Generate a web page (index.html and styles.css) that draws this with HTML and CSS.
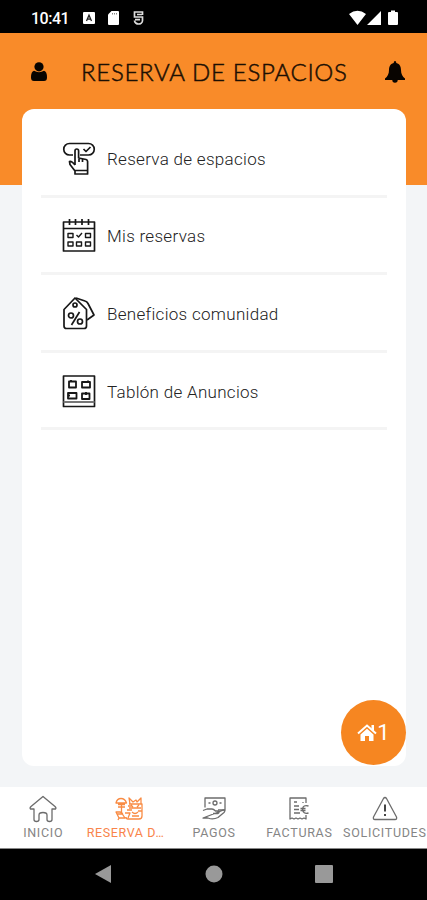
FILE: index.html
```
<!DOCTYPE html>
<html lang="es">
<head>
<meta charset="utf-8">
<meta name="viewport" content="width=device-width, initial-scale=1">
<title>Reserva de espacios</title>
<link rel="stylesheet" href="styles.css">
</head>
<body>
<div class="status">
  <span class="time">10:41</span>
  <svg class="ic-a" width="12" height="12" viewBox="0 0 12 12"><rect width="12" height="12" rx="1" fill="#fff"/><path d="M3.500 9 6 3.200 8.500 9M4.500 7.200h3" fill="none" stroke="#222" stroke-width="1.300"/></svg>
  <svg class="ic-sd" width="11" height="14" viewBox="0 0 11 14"><path d="M3.500 0H10a1 1 0 0 1 1 1v12a1 1 0 0 1-1 1H1a1 1 0 0 1-1-1V3.500z" fill="#fff"/><path d="M4.500 2v1.500M6.500 2v1.500M8.500 2v1.500" stroke="#777" stroke-width=".9"/></svg>
  <svg class="ic-s" width="11" height="14" viewBox="0 0 11 14"><path d="M9.500 4V1H1.500v5h8v3.500C9.500 11.500 7.500 13 5.500 13S1.500 11.500 1.500 9.500M4 3.500h5M2 8.700h5" fill="none" stroke="#ddd" stroke-width="1.700"/></svg>
  <svg class="ic-net" width="49" height="16" viewBox="0 0 49 16"><path d="M0 4Q8.500-2.500 17 4L8.500 15zM32 1v14H18zM40 2h2V.5h4V2h2q1 0 1 1v11q0 1-1 1h-8q-1 0-1-1V3q0-1 1-1z" fill="#fff"/></svg>
</div>
<header class="header">
  <svg class="user" width="16" height="19" viewBox="0 0 16 19"><circle cx="8" cy="4.800" r="4.600" fill="#080400"/><path d="M3 8.800Q8 11.500 13 8.800 16 9.500 16 15.500 16 19 13 19H3Q0 19 0 15.500 0 9.500 3 8.800z" fill="#080400"/></svg>
  <h1 class="title">RESERVA DE ESPACIOS</h1>
  <svg class="bell" width="20" height="22" viewBox="0 0 20 22"><path d="M10 0q1.300 0 1.300 2C15 3 16 6 16 9c0 4 1.500 6.500 4 8.500V19h-7.300a2.700 2.700 0 0 1-5.400 0H0v-1.500C2.500 15.500 4 13 4 9c0-3 1-6 4.700-7Q8.700 0 10 0z" fill="#080400"/></svg>
</header>
<main class="card">
  <div class="row">
    <svg class="icon" width="34" height="34" viewBox="0 0 34 34"><path d="M11 14H7.500a5.700 5.700 0 0 1 0-11.500h19a5.700 5.700 0 0 1 0 11.500H18"/><path d="m21.500 8 2.500 2.500L28.500 6"/><path d="M13 24V10q0-2 1.800-2t1.800 2v7l7.500 1.500q1.500.5 1.500 2V33H13v-3l-5-6.500-.5-3q2-.8 5.500 3.500M13 29.500h12.500M17 18v3M20.500 18.500V21"/></svg>
    <span>Reserva de espacios</span>
  </div>
  <div class="row">
    <svg class="icon" width="34" height="34" viewBox="0 0 34 34"><path d="M1.500 4h31v29h-31zM1.500 10.500h31M7.500 1v6M13.500 1v6M20 1v6M26.500 1v6"/><path class="fine" d="M6 15.500h5v4H6zM23.500 15.500h5v4h-5zM6 24h5v4H6zM14.500 24h5v4h-5zM23.500 24h5v4h-5zM14.500 17l2 2 3.500-4"/></svg>
    <span>Mis reservas</span>
  </div>
  <div class="row">
    <svg class="icon" width="34" height="34" viewBox="0 0 34 34"><path d="M2 13.500 13 2l11.500 11.500V30q0 2.500-2.500 2.500H4.500Q2 32.500 2 30z"/><path d="m14 2 9 3q2 .6 3 2.500l6 11.500-7 5"/><circle cx="13" cy="9" r="2"/><path d="m17.500 16-8 13"/><circle cx="9" cy="19.500" r="2.500"/><circle cx="18" cy="25.500" r="2.500"/></svg>
    <span>Beneficios comunidad</span>
  </div>
  <div class="row">
    <svg class="icon" width="34" height="34" viewBox="0 0 34 34"><path d="M1.500 2h31v30.500h-31z"/><path class="board" d="M1.500 28h31"/><path class="fine bold" d="M7 7.500h7v6H7zM20 8h8v5.500h-8zM6 19h8.500v5.500H6zM20 19.500h7.500V25H20zM9 6v2M26 6.500V9M5.500 21.500H8M24 18v3"/></svg>
    <span>Tablón de Anuncios</span>
  </div>
  <button class="fab"><svg width="20" height="18" viewBox="0 0 20 18"><path d="M1 9.500 10 1.500l9 8" fill="none" stroke="#fff" stroke-width="2"/><path d="M14.500 1H17v6l-2.500-2zM3.500 10.500 10 4.800l6.500 5.700V17H12v-5H8v5H3.500z" fill="#fff"/></svg><span>1</span></button>
</main>
<nav class="tabs">
  <div class="tab">
    <svg width="28" height="28" viewBox="0 0 28 28"><path d="M5 14H1.500Q.5 13 2 11.500L14 1.500l12 10q1.500 1.500.5 2.500H23v10.500q0 2-2.500 2T18 24.500V20q0-2.500-4-2.500T10 20v4.500q0 2-2.500 2t-2.500-2z"/></svg>
    <span>INICIO</span>
  </div>
  <div class="tab active">
    <svg width="28" height="28" viewBox="0 0 28 28"><path d="M1 8Q2 3.500 6 3.500T11.500 8zM6.500 8v10M3 12h7M1 17h4q2 0 3 3l2 3H4zM4 23l-1 2M10 18h5l-2 5M15 9l-1-6 4 4 3-2 1 2 4-4v6M14 9h13v12q0 3-3 3H13q-2 0-2-2M14 13h12M16 10l2 2M24 10l-2 2M17 17q3 3 6 0M17 21h7M3 9.500h7M2 19h6M12 15h5M23 16h4M13 11h4"/></svg>
    <span>RESERVA D…</span>
  </div>
  <div class="tab">
    <svg width="28" height="28" viewBox="0 0 28 28"><path d="M5 12.500V3h20v12h-7M8.500 8h2M19.500 8h2"/><circle cx="15" cy="8" r="2"/><path d="M3 15.500 7 14h5q1.500 0 3.500 2h3q1.500 1-.5 2.500h-5M18.500 17l5-2.200q2.500.2.500 2.700l-6 5Q13 25 8 23H3z"/></svg>
    <span>PAGOS</span>
  </div>
  <div class="tab">
    <svg width="28" height="28" viewBox="0 0 28 28"><path d="M21 8V3H5v21l2-1 2 1 2-1 2 1 2-1 2 1 2-1 2 1v-4M9 7h3M9 11h5M9 14.500h5M9 18h6M18 7v1"/><path d="M23.500 11Q18 9.500 17.500 14q.5 5.500 6 4M15.500 13.500h5M15.500 15.500h5"/></svg>
    <span>FACTURAS</span>
  </div>
  <div class="tab">
    <svg width="28" height="28" viewBox="0 0 28 28"><path d="M12.500 3.500q1.500-2 3 0L25.500 22q.7 2.500-1.500 2.500H4Q1.800 24.500 2.500 22z"/><path class="mark" d="M14 9.500v7M14 19v2"/></svg>
    <span>SOLICITUDES</span>
  </div>
</nav>
<footer class="system">
  <svg width="17" height="18" viewBox="0 0 17 18"><path d="M16 0v18L0 9z"/></svg>
  <svg width="18" height="18" viewBox="0 0 18 18"><circle cx="9" cy="9" r="8.500"/></svg>
  <svg width="18" height="18" viewBox="0 0 18 18"><rect width="18" height="18" rx="1"/></svg>
</footer>
</body>
</html>
```
FILE: styles.css
```
* { box-sizing: border-box; }
body {
  margin: 0;
  height: 900px;
  display: flex;
  flex-direction: column;
  overflow: hidden;
  background: #f3f5f7;
  font-family: Roboto, sans-serif;
}
.status {
  height: 33px;
  flex: none;
  display: flex;
  align-items: center;
  padding: 3px 29px 0 31px;
  background: #000;
  color: #fff;
}
.time {
  width: 52px;
  font-size: 16px;
  font-weight: 500;
  letter-spacing: -.5px;
}
.ic-sd { margin-left: 13px; }
.ic-s { margin-left: 14px; }
.ic-net { margin-left: auto; }
.header {
  height: 152px;
  flex: none;
  display: flex;
  align-items: flex-start;
  padding: 28px 22px 0 31px;
  background: #f98b29;
}
.user { margin-top: 1px; }
.title {
  margin: -3px 0 0 34px;
  width: 270px;
  font: 300 24px/28px Lato, sans-serif;
  letter-spacing: .7px;
  white-space: nowrap;
  color: #1c0f03;
  -webkit-text-stroke: .5px #1c0f03;
}
.bell { margin-left: auto; }
.card {
  position: relative;
  height: 657px;
  flex: none;
  margin: -76px 21px 0 22px;
  padding: 11px 19px 0;
  background: #fff;
  border-radius: 12px;
}
.row {
  height: 77.600px;
  display: flex;
  align-items: center;
  gap: 11px;
  padding: 1px 0 0 21px;
  border-bottom: 3px solid #f4f4f4;
  font-size: 17px;
  font-weight: 300;
  letter-spacing: .3px;
  color: #222;
}
.row span { padding-top: 2px; }
.icon {
  fill: none;
  stroke: #171717;
  stroke-width: 1.7;
  stroke-linejoin: round;
}
.fine { stroke-width: 1.4; }
.bold { stroke-width: 1.8; }
.board { stroke: #777; stroke-width: 2; }
.fab {
  position: absolute;
  right: 0;
  bottom: 1px;
  width: 65px;
  height: 65px;
  padding: 0;
  border: 0;
  border-radius: 50%;
  display: flex;
  align-items: center;
  justify-content: center;
  background: #f68621;
  color: #fff;
  font: 400 22px Roboto, sans-serif;
}
.tabs {
  height: 62px;
  flex: none;
  margin-top: 21px;
  display: grid;
  grid-template-columns: repeat(5, 1fr);
  background: #fff;
  border-bottom: 1px solid #888;
}
.tab {
  min-width: 0;
  display: flex;
  flex-direction: column;
  align-items: center;
  padding: 8px 0 0 1px;
  font-size: 12.500px;
  line-height: 19px;
  letter-spacing: .7px;
  white-space: nowrap;
  color: #858585;
}
.tab svg {
  flex: none;
  fill: none;
  stroke: #6c6c6c;
  stroke-width: 1.3;
  stroke-linejoin: round;
}
.tab .mark { stroke: #444; stroke-width: 2; }
.active { color: #f9844a; letter-spacing: .6px; }
.active span { margin-right: 6px; }
.active svg { stroke: #f98b43; }
.system {
  flex: 1;
  display: flex;
  align-items: center;
  justify-content: space-between;
  padding: 0 94px 1px 95px;
  background: #000;
}
.system svg { fill: #999; }
```
